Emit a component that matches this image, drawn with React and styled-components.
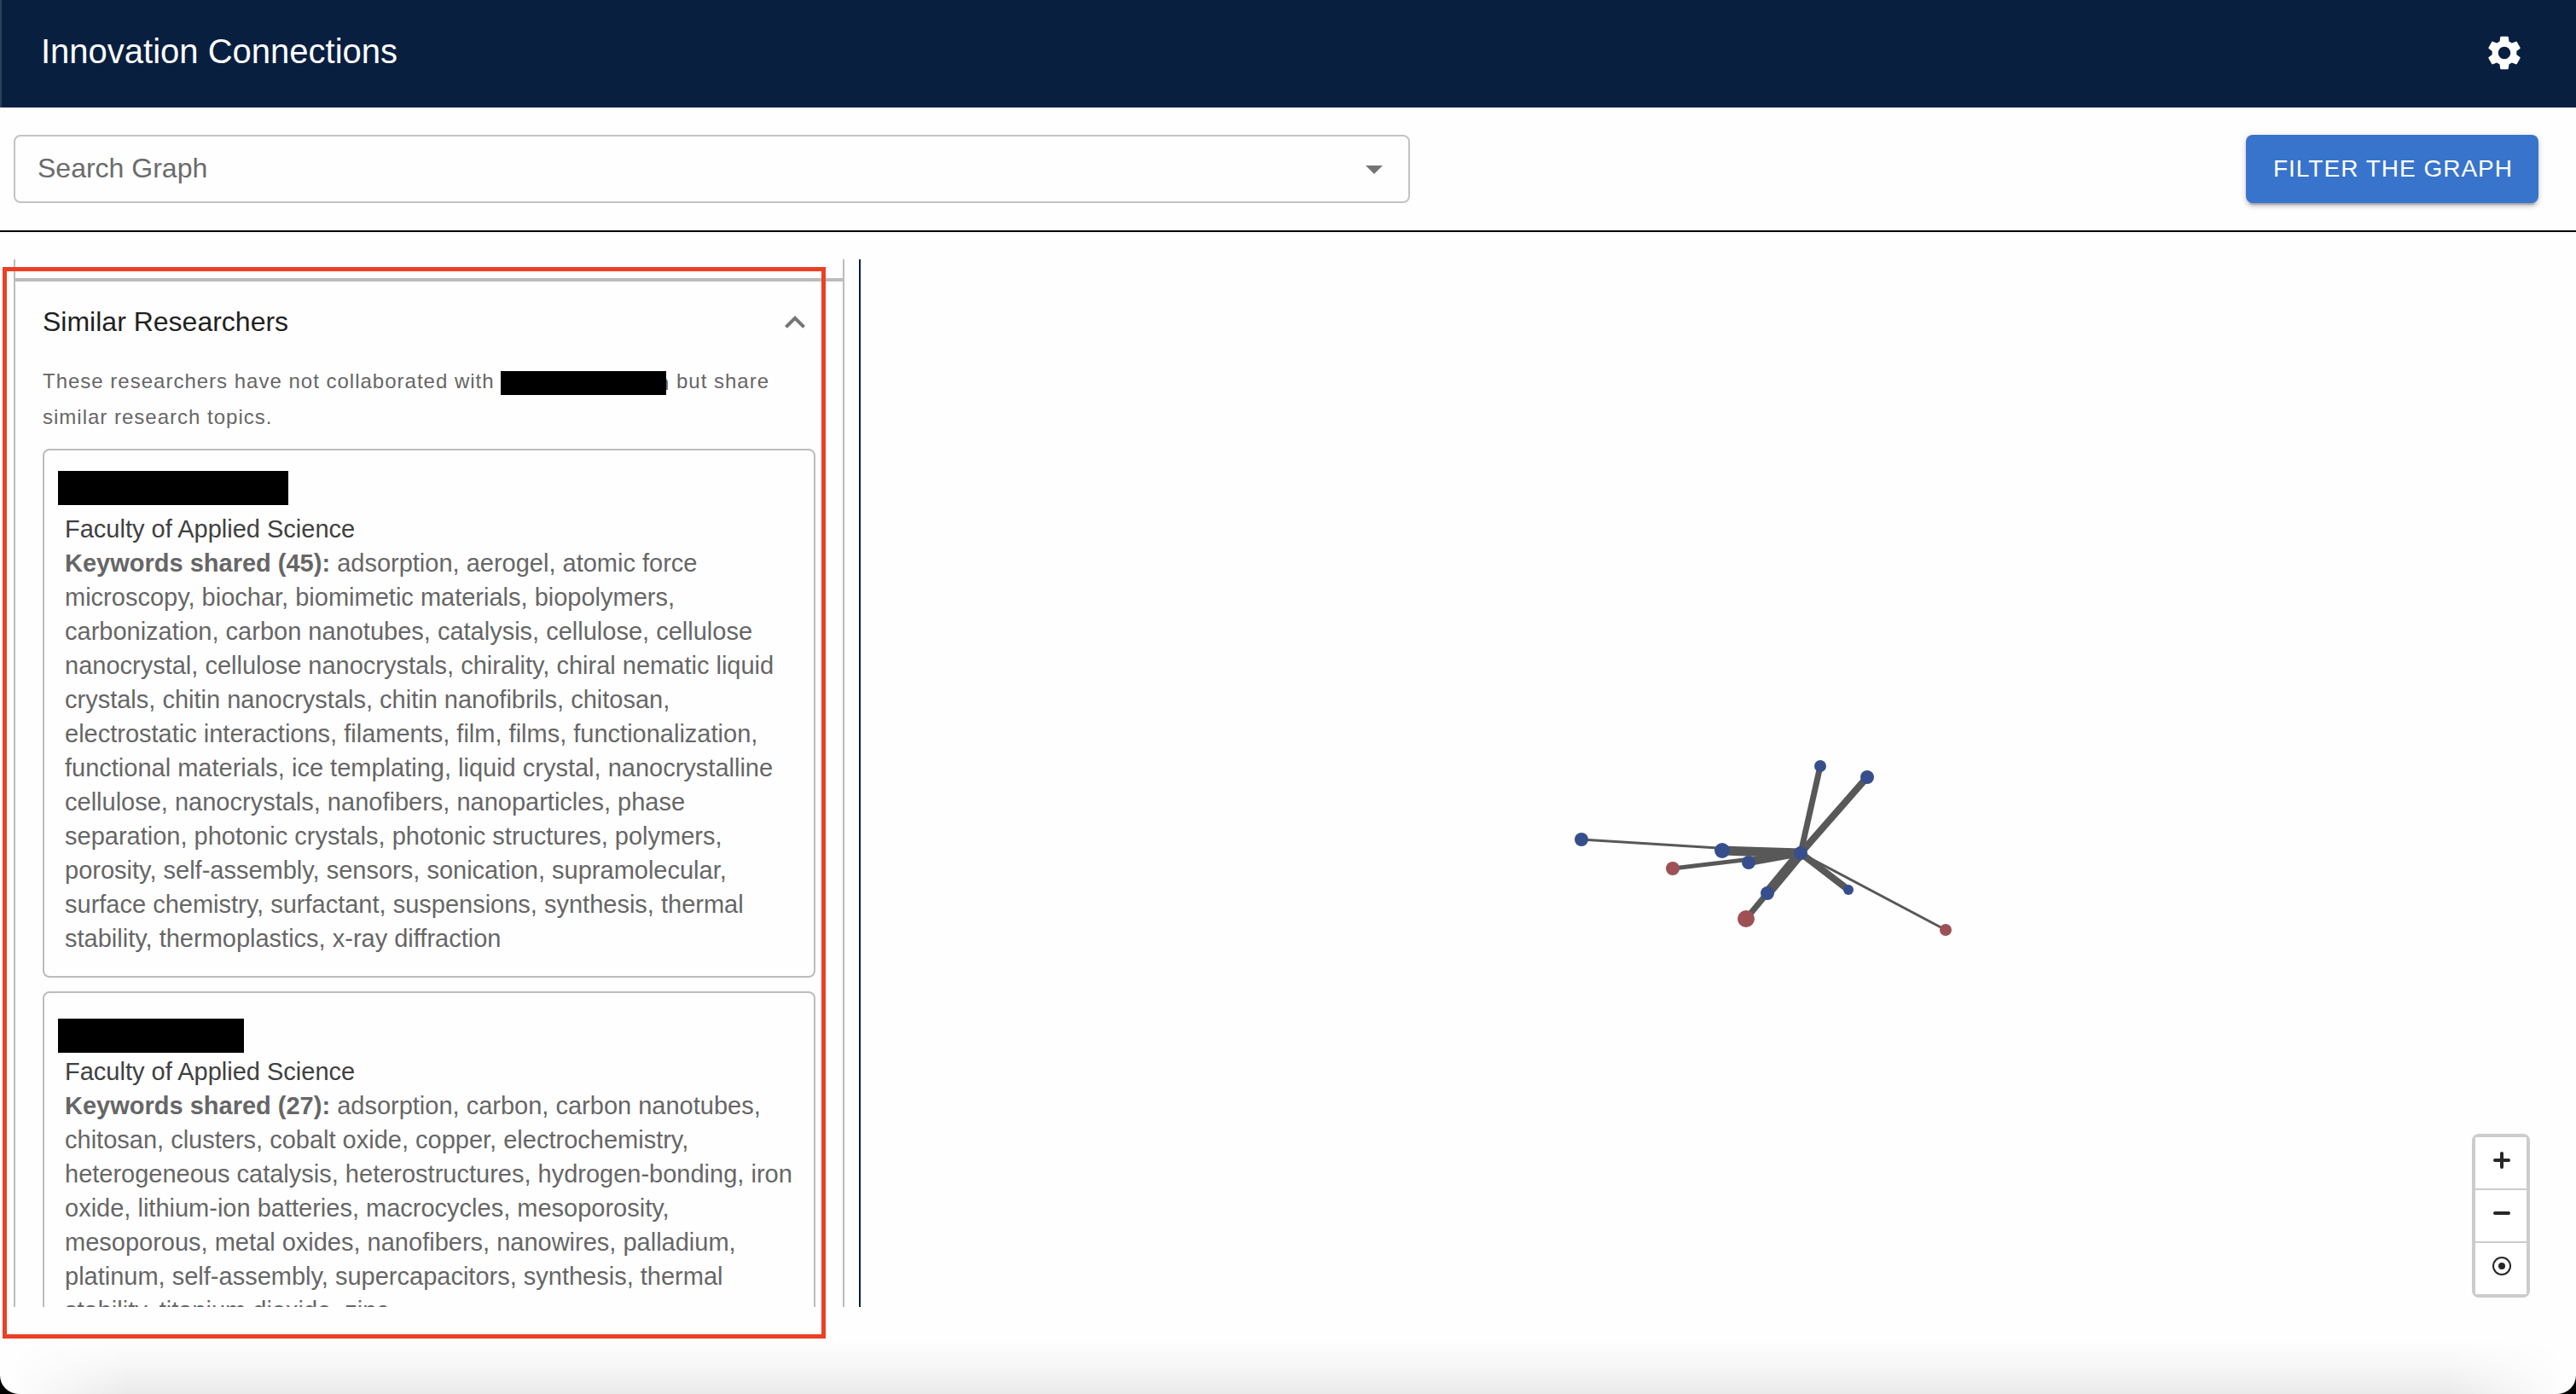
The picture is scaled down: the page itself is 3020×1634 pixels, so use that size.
import React from "react";
import styled, { createGlobalStyle } from "styled-components";
import { MdSettings, MdArrowDropDown, MdExpandLess } from "react-icons/md";

const GlobalStyle = createGlobalStyle`
  *, *::before, *::after { box-sizing: border-box; }
  body { margin: 0; background: #000; font-family: "Liberation Sans", Arial, sans-serif; }
  button, input { font: inherit; margin: 0; }
`;

const Page = styled.div`
  display: flex;
  flex-direction: column;
  height: 100vh;
  position: relative;
  overflow: hidden;
  background: #fefefe;
  border-radius: 0 0 22px 22px;
`;

const Header = styled.header`
  display: flex;
  align-items: center;
  justify-content: space-between;
  height: 126px;
  flex: none;
  padding: 0 60px 2px 46px;
  background: #081f40;
  color: #fff;
  border-left: 2px solid #2c3f5b;
`;

const AppTitle = styled.h1`
  margin: 0;
  padding-bottom: 4px;
  font-size: 40px;
  line-height: 64px;
  font-weight: 400;
`;

const IconButton = styled.button`
  display: flex;
  padding: 0;
  border: 0;
  background: none;
  color: ${(p) => p.$color};
  font-size: 48px;
`;

const Toolbar = styled.div`
  display: flex;
  align-items: center;
  justify-content: space-between;
  flex: none;
  padding: 32px 44px 32px 16px;
  border-bottom: 2px solid #000;
`;

const SearchField = styled.label`
  display: flex;
  align-items: center;
  width: 55.3%;
  height: 80px;
  padding: 0 16px 0 26px;
  border: 2px solid #c3c3c3;
  border-radius: 8px;
`;

const SearchInput = styled.input`
  flex: 1;
  min-width: 0;
  padding: 0 0 2px;
  border: 0;
  outline: 0;
  background: none;
  font-size: 32px;
  line-height: 40px;
  &::placeholder { color: #6b6b6b; opacity: 1; }
`;

const FilterButton = styled.button`
  height: 80px;
  padding: 0 30px 0 32px;
  border: 0;
  border-radius: 8px;
  background: #3874cb;
  color: #fff;
  font-size: 28px;
  letter-spacing: 1px;
  text-transform: uppercase;
  box-shadow: 0 6px 2px -4px rgba(0, 0, 0, 0.2), 0 4px 4px rgba(0, 0, 0, 0.14), 0 2px 10px rgba(0, 0, 0, 0.12);
`;

const Columns = styled.main`
  display: grid;
  grid-template-columns: 1fr 2fr;
  flex: 1;
  min-height: 0;
  padding: 32px 0 102px;
`;

const Side = styled.aside`
  min-height: 0;
  padding: 0 17px 0 16px;
  display: flex;
`;

const Panel = styled.div`
  flex: 1;
  overflow: hidden;
  border: solid #bcbcbc;
  border-width: 0 2px;
`;

const Section = styled.section`
  margin-top: 22px;
  padding: 0 32px;
  border-top: 4px solid #bcbcbc;
`;

const SectionHeader = styled.div`
  display: flex;
  align-items: center;
  justify-content: space-between;
  height: 96px;
`;

const SectionTitle = styled.h2`
  margin: 0;
  padding-bottom: 2px;
  color: #212121;
  font-size: 32px;
  line-height: 48px;
  font-weight: 400;
`;

const Note = styled.p`
  margin: 0 0 16px;
  color: #666;
  font-size: 24px;
  line-height: 42px;
  letter-spacing: 1px;
`;

const HiddenName = styled.span`
  display: inline-block;
  position: relative;
  width: 198px;
  height: 28px;
  line-height: 28px;
  vertical-align: middle;
  text-align: right;
  &::before {
    content: "";
    position: absolute;
    inset: 0 4px 0 0;
    background: #000;
  }
`;

const Card = styled.article`
  margin-bottom: 16px;
  padding: 24px;
  border: 2px solid #bcbcbc;
  border-radius: 8px;
  color: #666;
  font-size: 29px;
  line-height: 40px;
`;

const NameRow = styled.div`
  display: flex;
  align-items: ${(p) => p.$align};
  height: 48px;
  margin-left: -8px;
  padding-bottom: 2px;
`;

const NameBlock = styled.div`
  width: ${(p) => p.$width}px;
  height: 40px;
  background: #000;
`;

const Faculty = styled.div`
  color: #404040;
`;

const Keywords = styled.p`
  margin: 0;
`;

const GraphArea = styled.section`
  position: relative;
  border-left: 2px solid #081f40;
`;

const Graph = styled.svg`
  position: absolute;
  left: 50%;
  top: 50%;
  width: 500px;
  height: 270px;
  margin: -58px 0 0 -194px;
`;

const ZoomControls = styled.div`
  position: absolute;
  right: 54px;
  bottom: 11px;
  display: flex;
  flex-direction: column;
  gap: 2px;
  border: 4px solid #ccc;
  border-radius: 8px;
  background: #ccc;
`;

const ZoomButton = styled.button`
  display: flex;
  align-items: center;
  justify-content: center;
  width: 60px;
  height: 60px;
  padding: 0 0 6px 2px;
  border: 0;
  background: #fff;
  color: #272727;
`;

const Highlight = styled.div`
  position: absolute;
  left: 3px;
  top: 313px;
  bottom: 65px;
  width: calc(32% - 1px);
  border: 5px solid #eb4026;
  pointer-events: none;
`;

const BottomShade = styled.div`
  position: absolute;
  left: 0;
  right: 0;
  bottom: 0;
  height: 64px;
  background: linear-gradient(rgba(0, 0, 0, 0), rgba(0, 0, 0, 0.03) 50%, rgba(0, 0, 0, 0.08));
  mask-image: linear-gradient(90deg, transparent 10px, #000 150px, #000 calc(100% - 150px), transparent calc(100% - 10px));
  pointer-events: none;
`;

const hub = [291, 140];
const nodes = [
  { x: 34, y: 124, r: 8, w: 3, c: "blue" },
  { x: 461, y: 230, r: 7, w: 3, c: "red" },
  { x: 141, y: 158, r: 8, w: 5, c: "red" },
  { x: 227, y: 217, r: 10, w: 7, c: "red" },
  { x: 314, y: 38, r: 7, w: 7, c: "blue" },
  { x: 369, y: 51, r: 8, w: 8, c: "blue" },
  { x: 199, y: 137, r: 9, w: 11, c: "blue" },
  { x: 230, y: 151, r: 8, w: 8, c: "blue" },
  { x: 252, y: 187, r: 8, w: 12, c: "blue" },
  { x: 347, y: 183, r: 6, w: 8, c: "blue" },
];
const fills = { blue: "#364f8c", red: "#9d5154" };

const researchers = [
  {
    width: 270,
    align: "flex-start",
    count: 45,
    keywords:
      "adsorption, aerogel, atomic force microscopy, biochar, biomimetic materials, biopolymers, carbonization, carbon nanotubes, catalysis, cellulose, cellulose nanocrystal, cellulose nanocrystals, chirality, chiral nematic liquid crystals, chitin nanocrystals, chitin nanofibrils, chitosan, electrostatic interactions, filaments, film, films, functionalization, functional materials, ice templating, liquid crystal, nanocrystalline cellulose, nanocrystals, nanofibers, nanoparticles, phase separation, photonic crystals, photonic structures, polymers, porosity, self-assembly, sensors, sonication, supramolecular, surface chemistry, surfactant, suspensions, synthesis, thermal stability, thermoplastics, x-ray diffraction",
  },
  {
    width: 218,
    align: "flex-end",
    count: 27,
    keywords:
      "adsorption, carbon, carbon nanotubes, chitosan, clusters, cobalt oxide, copper, electrochemistry, heterogeneous catalysis, heterostructures, hydrogen-bonding, iron oxide, lithium-ion batteries, macrocycles, mesoporosity, mesoporous, metal oxides, nanofibers, nanowires, palladium, platinum, self-assembly, supercapacitors, synthesis, thermal stability, titanium dioxide, zinc",
  },
];

function NetworkGraph() {
  return (
    <Graph viewBox="0 0 500 270" role="img" aria-label="Researcher graph">
      {nodes.map((n) => (
        <line key={`${n.x}`} x1={hub[0]} y1={hub[1]} x2={n.x} y2={n.y} stroke="#585858" strokeWidth={n.w} />
      ))}
      {nodes.map((n) => (
        <circle key={`${n.x}`} cx={n.x} cy={n.y} r={n.r} fill={fills[n.c]} />
      ))}
      <circle cx={hub[0]} cy={hub[1]} r="8" fill={fills.blue} />
    </Graph>
  );
}

export default function App() {
  return (
    <>
      <GlobalStyle />
      <Page>
        <Header>
          <AppTitle>Innovation Connections</AppTitle>
          <IconButton $color="#fff" aria-label="Settings">
            <MdSettings />
          </IconButton>
        </Header>
        <Toolbar>
          <SearchField>
            <SearchInput placeholder="Search Graph" aria-label="Search Graph" />
            <IconButton $color="#757575" aria-label="Open">
              <MdArrowDropDown />
            </IconButton>
          </SearchField>
          <FilterButton>Filter the graph</FilterButton>
        </Toolbar>
        <Columns>
          <Side>
            <Panel>
              <Section>
                <SectionHeader>
                  <SectionTitle>Similar Researchers</SectionTitle>
                  <IconButton $color="#757575" aria-label="Collapse">
                    <MdExpandLess />
                  </IconButton>
                </SectionHeader>
                <Note>
                  These researchers have not collaborated with <HiddenName>n</HiddenName> but share similar research
                  topics.
                </Note>
                {researchers.map((r) => (
                  <Card key={r.count}>
                    <NameRow $align={r.align}>
                      <NameBlock $width={r.width} />
                    </NameRow>
                    <Faculty>Faculty of Applied Science</Faculty>
                    <Keywords>
                      <b>Keywords shared ({r.count}):</b> {r.keywords}
                    </Keywords>
                  </Card>
                ))}
              </Section>
            </Panel>
          </Side>
          <GraphArea>
            <NetworkGraph />
            <ZoomControls>
              <ZoomButton aria-label="Zoom in">
                <svg width="20" height="20" viewBox="0 0 20 20" fill="none" stroke="currentColor" strokeWidth="4" strokeLinecap="round">
                  <path d="M10 2v16M2 10h16" />
                </svg>
              </ZoomButton>
              <ZoomButton aria-label="Zoom out">
                <svg width="20" height="20" viewBox="0 0 20 20" fill="none" stroke="currentColor" strokeWidth="4" strokeLinecap="round">
                  <path d="M2 10h16" />
                </svg>
              </ZoomButton>
              <ZoomButton aria-label="Reset view">
                <svg width="22" height="22" viewBox="0 0 22 22">
                  <circle cx="11" cy="11" r="10" fill="none" stroke="currentColor" strokeWidth="2" />
                  <circle cx="11" cy="11" r="4" fill="currentColor" />
                </svg>
              </ZoomButton>
            </ZoomControls>
          </GraphArea>
        </Columns>
        <Highlight />
        <BottomShade />
      </Page>
    </>
  );
}
